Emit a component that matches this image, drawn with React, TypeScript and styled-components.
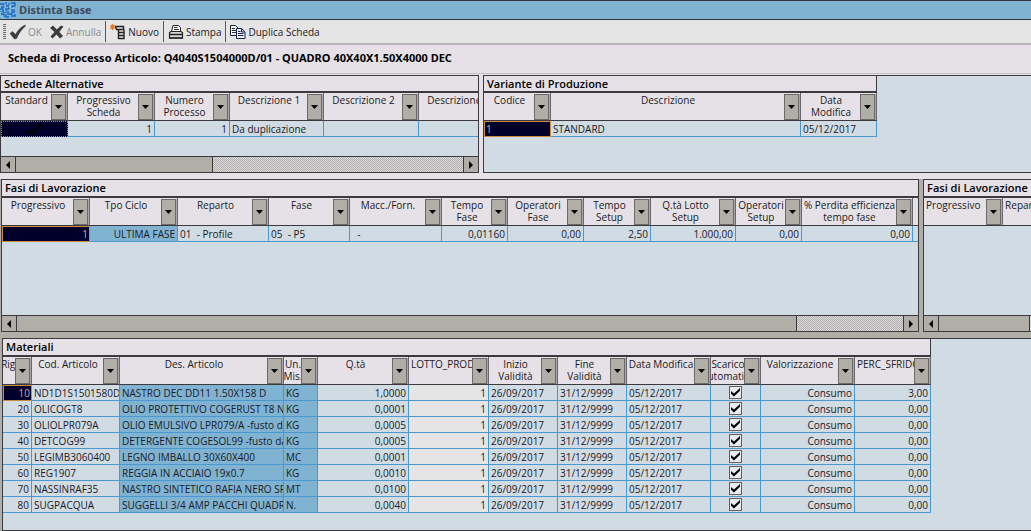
import React from 'react';
import styled, { createGlobalStyle, css } from 'styled-components';

const c = {
  face: '#e5e1e6',
  body: '#d1dbe4',
  key: '#80b2d1',
  edge: '#3c3a3e',
  grid: '#4a98d0',
  grey: '#b0aea6',
  navy: '#00002a',
  amber: '#c98a3c',
};

const GlobalStyle = createGlobalStyle`
  * { box-sizing: border-box; }
  html, body { margin: 0; height: 100%; }
  body {
    background: ${c.face};
    color: #1a1a1e;
    font: 10px/12px "Open Sans", "Noto Sans", sans-serif;
    overflow: hidden;
  }
  #root { height: 100%; }
  button { font: inherit; color: inherit; }
`;

const Page = styled.div`
  display: flex;
  flex-direction: column;
  min-height: 100%;
`;

const TitleBar = styled.header`
  display: flex;
  align-items: center;
  gap: 3px;
  height: 20px;
  background: ${c.key};
  border-top: 1px solid #33363c;
  border-bottom: 1px solid #33363c;
`;

const WindowTitle = styled.h1`
  margin: 0;
  font-size: 11px;
  line-height: 16px;
  font-weight: 700;
  color: #3d4c5c;
`;

const Toolbar = styled.nav`
  display: flex;
  align-items: center;
  height: 25px;
  padding: 0 3px;
  background: #e5e5e5;
  border-bottom: 2px solid #b9b7b9;
`;

const Grip = styled.span`
  width: 3px;
  height: 16px;
  background: repeating-linear-gradient(#6c6c6c 0 1px, transparent 1px 2px);
`;

const ToolButton = styled.button`
  display: flex;
  align-items: center;
  gap: 2px;
  height: 20px;
  padding: 0 4px;
  border: 0;
  background: none;
  font-size: 10px;
  &:disabled { color: #8c8c90; }
`;

const Divider = styled.span`
  width: 1px;
  height: 21px;
  background: #58585c;
`;

const ArticleHeading = styled.h2`
  margin: 0;
  padding: 4px 8px;
  height: 29px;
  font-family: "Noto Sans", sans-serif;
  font-size: 11px;
  line-height: 17px;
  font-weight: 700;
  color: #000;
  border-bottom: 1px solid #c4c1c5;
  white-space: nowrap;
`;

const TopRow = styled.div`
  display: grid;
  grid-template-columns: minmax(0, 479fr) minmax(0, 548fr);
  column-gap: 4px;
  height: 98px;
  margin: 1px 0 6px;
`;

const PhaseRow = styled.div`
  display: grid;
  grid-template-columns: minmax(0, 919fr) minmax(0, 108fr);
  column-gap: 4px;
  height: 153px;
  padding-left: 1px;
  background: ${c.grey};
`;

const MaterialRow = styled.div`
  display: flex;
  flex: 1;
  padding: 6px 0 0 2px;
  background: ${c.grey};
`;

const Panel = styled.section<{ $open?: boolean }>`
  display: flex;
  flex-direction: column;
  flex: 1;
  min-width: 0;
  overflow: hidden;
  background: ${c.body};
  border: 1px solid ${c.edge};
  ${(p) => p.$open && css`border-right: 0;`}
`;

const PanelTitle = styled.h3<{ $width?: number; $low?: boolean }>`
  flex: none;
  margin: 0;
  height: ${(p) => (p.$low ? 17 : 18)}px;
  padding: 0 0 0 3px;
  width: ${(p) => (p.$width ? `${p.$width}px` : '100%')};
  font-size: 11px;
  line-height: 16px;
  font-weight: 600;
  color: #000;
  white-space: nowrap;
  overflow: hidden;
  background: ${c.face};
  border-bottom: 2px solid ${c.edge};
  ${(p) => p.$width && css`border-right: 1px solid ${c.edge};`}
`;

const PanelBody = styled.div`
  flex: 1;
  min-height: 0;
  overflow: hidden;
`;

const Table = styled.table`
  table-layout: fixed;
  width: 0;
  border-collapse: separate;
  border-spacing: 0;
`;

const Th = styled.th`
  height: 28px;
  padding: 0;
  font-weight: 400;
  background: ${c.face};
  border-bottom: 1px solid ${c.edge};
  border-right: 1px solid #69666b;
`;

const HeadCell = styled.div`
  display: flex;
  height: 26px;
  border-right: 1px solid #aaa7ac;
`;

const HeadText = styled.span<{ $start?: boolean }>`
  flex: 1;
  min-width: 0;
  display: flex;
  flex-direction: column;
  align-items: ${(p) => (p.$start ? 'flex-start' : 'center')};
  padding-left: ${(p) => (p.$start ? '2px' : '1px')};
  overflow: hidden;
  white-space: pre;
`;

const FilterButton = styled.button`
  flex: none;
  display: flex;
  align-items: center;
  justify-content: center;
  width: 15px;
  height: 26px;
  padding: 0;
  background: ${c.grey};
  border: 1px solid #6c6a68;
`;

type Look = 'plain' | 'key' | 'pale' | 'selected' | 'focus';

const Td = styled.td<{ $look: Look; $align: string }>`
  height: 16px;
  padding: 0 2px;
  line-height: 14px;
  text-align: ${(p) => p.$align};
  white-space: pre;
  overflow: hidden;
  border-right: 1px solid ${c.grid};
  border-bottom: 1px solid ${c.grid};
  ${(p) => p.$align === 'left' && css`padding-right: 0;`}
  ${(p) => p.$look === 'key' && css`background: ${c.key};`}
  ${(p) => p.$look === 'pale' && css`background: #e5e5e5;`}
  ${(p) =>
    (p.$look === 'selected' || p.$look === 'focus') &&
    css`
      background: ${c.navy};
      color: #b4b6c4;
      padding: 0 1px;
      border: 1px ${p.$look === 'focus' ? 'dotted' : 'solid'} ${c.amber};
      line-height: 13px;
    `}
`;

const Check = styled.input`
  appearance: none;
  display: block;
  width: 13px;
  height: 13px;
  margin: 0 auto;
  background: #ececf0;
  border: 1px solid #625f62;
  &:checked::before {
    content: '';
    display: block;
    width: 9px;
    height: 9px;
    margin: 1px;
    background: #000;
    clip-path: polygon(0 33%, 33% 60%, 100% 0, 100% 30%, 33% 95%, 0 65%);
  }
`;

const ScrollBar = styled.div`
  flex: none;
  display: flex;
  height: 16px;
  border-top: 1px solid ${c.edge};
`;

const ScrollArrow = styled.button`
  flex: none;
  display: flex;
  align-items: center;
  justify-content: center;
  width: 14px;
  padding: 0;
  background: ${c.grey};
  border: 0;
  outline: 1px solid ${c.edge};
`;

const Track = styled.div`
  flex: 1;
  min-width: 0;
  margin: 0 1px;
  background: repeating-conic-gradient(#b0aeac 0 25%, #dcdadb 0 50%) 0 0 / 2px 2px;
`;

const Thumb = styled.div<{ $share: number }>`
  width: ${(p) => p.$share}%;
  height: 100%;
  background: ${c.grey};
  border-right: 1px solid ${c.edge};
`;

const Down = () => (
  <svg width="7" height="4" viewBox="0 0 7 4" aria-hidden="true">
    <path d="M0 0h7L3.500 4z" fill="#000" />
  </svg>
);

const Arrow = ({ left }: { left?: boolean }) => (
  <svg width="4" height="8" viewBox="0 0 4 8" aria-hidden="true">
    <path d={left ? 'M4 0v8L0 4z' : 'M0 0v8l4-4z'} fill="#000" />
  </svg>
);

function Scroll({ share, endless }: { share: number; endless?: boolean }) {
  return (
    <ScrollBar>
      <ScrollArrow type="button" aria-label="Scorri a sinistra"><Arrow left /></ScrollArrow>
      <Track><Thumb $share={share} /></Track>
      {!endless && (
        <ScrollArrow type="button" aria-label="Scorri a destra"><Arrow /></ScrollArrow>
      )}
    </ScrollBar>
  );
}

type Column = {
  head: string;
  width: number;
  align?: 'left' | 'right' | 'center';
  look?: Look;
  start?: boolean;
  bare?: boolean;
};

type GridProps = {
  columns: Column[];
  rows: (string | boolean)[][];
  active?: Look;
};

function Grid({ columns, rows, active = 'selected' }: GridProps) {
  return (
    <Table>
      <colgroup>
        {columns.map((col, i) => <col key={i} width={col.width} />)}
      </colgroup>
      <thead>
        <tr>
          {columns.map((col, i) => (
            <Th key={i} scope="col">
              <HeadCell>
                <HeadText $start={col.start}>
                  {col.head.split('\n').map((line) => <span key={line}>{line}</span>)}
                </HeadText>
                {!col.bare && (
                  <FilterButton type="button" aria-label={`Filtra ${col.head}`}><Down /></FilterButton>
                )}
              </HeadCell>
            </Th>
          ))}
        </tr>
      </thead>
      <tbody>
        {rows.map((row, r) => (
          <tr key={r}>
            {row.map((cell, i) => (
              <Td
                key={i}
                $align={columns[i].align ?? 'left'}
                $look={r === 0 && i === 0 ? active : columns[i].look ?? 'plain'}
              >
                {typeof cell === 'boolean'
                  ? <Check type="checkbox" defaultChecked={cell} aria-label="Scarico automatico" />
                  : cell === '✓' ? <StandardMark /> : cell}
              </Td>
            ))}
          </tr>
        ))}
      </tbody>
    </Table>
  );
}

const MarkSvg = styled.svg`
  display: block;
  margin: 0 auto;
`;

const StandardMark = () => (
  <MarkSvg width="16" height="13" viewBox="0 0 16 13" role="img" aria-label="Standard">
    <path d="M1 7l4 4L14 1" fill="none" stroke="#000" strokeWidth="2" />
  </MarkSvg>
);

const alternatives: Column[] = [
  { head: 'Standard', width: 67, align: 'center' },
  { head: 'Progressivo\nScheda', width: 87, align: 'right' },
  { head: 'Numero\nProcesso', width: 75, align: 'right' },
  { head: 'Descrizione 1', width: 94 },
  { head: 'Descrizione 2', width: 95 },
  { head: 'Descrizione 3', width: 95 },
];

const variants: Column[] = [
  { head: 'Codice', width: 67 },
  { head: 'Descrizione', width: 250 },
  { head: 'Data\nModifica', width: 76 },
];

const phases: Column[] = [
  { head: 'Progressivo', width: 88, align: 'right' },
  { head: 'Tpo Ciclo', width: 88, align: 'right', look: 'key' },
  { head: 'Reparto', width: 91 },
  { head: 'Fase', width: 81 },
  { head: 'Macc./Forn.', width: 92 },
  { head: 'Tempo\nFase', width: 66, align: 'right' },
  { head: 'Operatori\nFase', width: 76, align: 'right' },
  { head: 'Tempo\nSetup', width: 67, align: 'right' },
  { head: 'Q.tà Lotto\nSetup', width: 85, align: 'right' },
  { head: 'Operatori\nSetup', width: 66, align: 'right' },
  { head: '% Perdita efficienza\ntempo fase', width: 111, align: 'right' },
  { head: '', width: 40, bare: true },
];

const otherPhases: Column[] = [
  { head: 'Progressivo', width: 79, start: true },
  { head: 'Reparto', width: 91, start: true },
];

const materials: Column[] = [
  { head: 'Rig.', width: 29, align: 'right' },
  { head: 'Cod. Articolo', width: 88 },
  { head: 'Des. Articolo', width: 164, look: 'key' },
  { head: 'Un.\nMis.', width: 34, look: 'key' },
  { head: 'Q.tà', width: 91, align: 'right' },
  { head: 'LOTTO_PROD', width: 80, align: 'right', look: 'pale', start: true },
  { head: 'Inizio\nValidità', width: 69 },
  { head: 'Fine\nValidità', width: 69 },
  { head: 'Data Modifica', width: 84 },
  { head: 'Scarico\nAutomatico', width: 50, align: 'center' },
  { head: 'Valorizzazione', width: 94, align: 'right' },
  { head: 'PERC_SFRIDO', width: 76, align: 'right', start: true },
];

const items = [
  ['10', 'ND1D1S1501580D', 'NASTRO DEC DD11 1.50X158 D', 'KG', '1,0000', '3,00'],
  ['20', 'OLICOGT8', 'OLIO PROTETTIVO COGERUST T8 N', 'KG', '0,0001', '0,00'],
  ['30', 'OLIOLPR079A', 'OLIO EMULSIVO LPR079/A -fusto da', 'KG', '0,0005', '0,00'],
  ['40', 'DETCOG99', 'DETERGENTE COGESOL99 -fusto da', 'KG', '0,0005', '0,00'],
  ['50', 'LEGIMB3060400', 'LEGNO IMBALLO 30X60X400', 'MC', '0,0001', '0,00'],
  ['60', 'REG1907', 'REGGIA IN ACCIAIO 19x0.7', 'KG', '0,0010', '0,00'],
  ['70', 'NASSINRAF35', 'NASTRO SINTETICO RAFIA NERO SP', 'MT', '0,0100', '0,00'],
  ['80', 'SUGPACQUA', 'SUGGELLI 3/4 AMP PACCHI QUADRI', 'N.', '0,0040', '0,00'],
];

const materialRows = items.map(([n, code, des, um, qty, waste]) => [
  n, code, des, um, qty, '1', '26/09/2017', '31/12/9999', '05/12/2017', true, 'Consumo', waste,
]);

const Logo = () => (
  <svg width="16" height="16" viewBox="0 0 16 16" aria-hidden="true">
    <path
      d="M0 2h4v3H1M6 0v4h3V1M11 1h4v3h-3v2M0 7h3v3h3V7h3V5M11 8h4M8 9v3h4v-2h3M1 12h3v3M6 12v3h3M11 14h4v-2M1 9v1"
      fill="none" stroke="#1768c4" strokeWidth="1.300"
    />
    <path d="M5 2v3M10 3v3M13 6v1M5 9v1M10 7v1M2 14v1" stroke="#c8e2f4" strokeWidth="1" />
  </svg>
);

const OkIcon = () => (
  <svg width="16" height="16" viewBox="0 0 16 16" aria-hidden="true">
    <path d="M0 9.500L2.500 7.500L5.500 10.500C8 6 11 3 15 1L15.500 2C11.500 5.500 8.500 9.500 6.500 14.500L4.500 15z" fill="#3c3c40" stroke="#3c3c40" strokeWidth=".6" />
  </svg>
);

const CancelIcon = () => (
  <svg width="14" height="14" viewBox="0 0 14 14" aria-hidden="true">
    <path d="M0 3L3 .5L6.800 4.500L11 .5L13.500 1.500L9.300 7L13 11L10 13.500L6.500 9.500L2.500 13.500L.5 11.500L4.500 7z" fill="#3c3c40" />
  </svg>
);

const NewIcon = () => (
  <svg width="16" height="16" viewBox="0 0 16 16" aria-hidden="true">
    <path d="M5.500 2.500h8v3h-7zM8.500 5.500v9h5.500v-9M8.500 8.500h5.500M8.500 11.500h5.500" fill="none" stroke="#222" strokeWidth="1.400" />
    <path d="M2.500 0v6M0 3h5M.7 1.200l3.600 3.600M4.300 1.200L.7 4.800" stroke="#e07a1c" strokeWidth="1.200" />
  </svg>
);

const PrintIcon = () => (
  <svg width="16" height="16" viewBox="0 0 16 16" aria-hidden="true">
    <path d="M3.500 7.500L5 1.500h5.500l2 2v4" fill="#fff" stroke="#222" />
    <path d="M6 3.500h3.500M6 5.500h5" stroke="#333" />
    <path d="M1.500 8.500l1.500-1h10l1.500 1v5.500h-13z" fill="#d8d8d8" stroke="#222" strokeWidth="1.200" />
    <path d="M1 10.500h14M1 14h14" stroke="#222" strokeWidth="1.300" />
  </svg>
);

const CopyIcon = () => (
  <svg width="16" height="16" viewBox="0 0 16 16" aria-hidden="true">
    <path d="M.5 1.500h5l2.500 2.500v7.500H.5z" fill="#eef" stroke="#222" />
    <path d="M2 4.500h3M2 6.500h4M2 8.500h4" stroke="#333" />
    <path d="M6.500 4.500h5L15 8v6.500H6.500z" fill="#eef" stroke="#1c2550" />
    <path d="M11.500 4.500V8H15M8 7.500h2.500M8 9.500h5.500M8 11.500h5.500" fill="none" stroke="#1c2550" />
  </svg>
);

export default function App() {
  return (
    <Page>
      <GlobalStyle />
      <TitleBar>
        <Logo />
        <WindowTitle>Distinta Base</WindowTitle>
      </TitleBar>
      <Toolbar aria-label="Comandi">
        <Grip />
        <ToolButton type="button" disabled><OkIcon />OK</ToolButton>
        <ToolButton type="button" disabled><CancelIcon />Annulla</ToolButton>
        <Divider />
        <ToolButton type="button"><NewIcon />Nuovo</ToolButton>
        <Divider />
        <ToolButton type="button"><PrintIcon />Stampa</ToolButton>
        <Divider />
        <ToolButton type="button"><CopyIcon />Duplica Scheda</ToolButton>
      </Toolbar>
      <ArticleHeading>
        Scheda di Processo Articolo: Q4040S1504000D/01 - QUADRO 40X40X1.50X4000 DEC
      </ArticleHeading>
      <TopRow>
        <Panel>
          <PanelTitle $low>Schede Alternative</PanelTitle>
          <PanelBody>
            <Grid columns={alternatives} rows={[['✓', '1', '1', 'Da duplicazione', '', '']]} active="focus" />
          </PanelBody>
          <Scroll share={44} />
        </Panel>
        <Panel $open>
          <PanelTitle $low $width={393}>Variante di Produzione</PanelTitle>
          <PanelBody>
            <Grid columns={variants} rows={[['1', 'STANDARD', '05/12/2017']]} />
          </PanelBody>
        </Panel>
      </TopRow>
      <PhaseRow>
        <Panel>
          <PanelTitle>Fasi di Lavorazione</PanelTitle>
          <PanelBody>
            <Grid
              columns={phases}
              rows={[['1', 'ULTIMA FASE', '01  - Profile', '05  - P5', '  -', '0,01160', '0,00', '2,50', '1.000,00', '0,00', '0,00', '']]}
            />
          </PanelBody>
          <Scroll share={88} />
        </Panel>
        <Panel $open>
          <PanelTitle>Fasi di Lavorazione ...</PanelTitle>
          <PanelBody>
            <Grid columns={otherPhases} rows={[]} />
          </PanelBody>
          <Scroll share={100} endless />
        </Panel>
      </PhaseRow>
      <MaterialRow>
        <Panel $open>
          <PanelTitle $width={928}>Materiali</PanelTitle>
          <PanelBody>
            <Grid columns={materials} rows={materialRows} />
          </PanelBody>
        </Panel>
      </MaterialRow>
    </Page>
  );
}
